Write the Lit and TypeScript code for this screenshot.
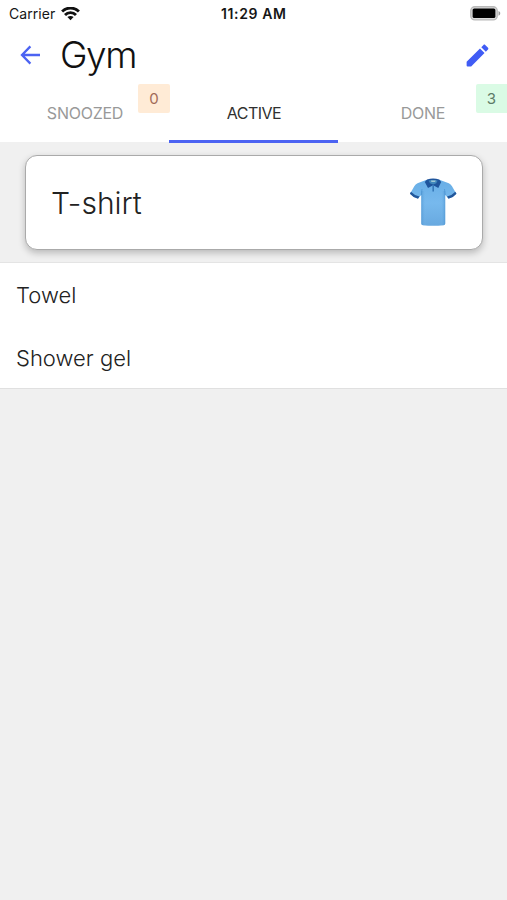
import { LitElement, html, css } from "lit";
import { customElement, property } from "lit/decorators.js";

@customElement("status-bar")
class StatusBar extends LitElement {
  static styles = css`
    :host { display: grid; grid-template-columns: 1fr auto 1fr; height: 28px; align-items: center; font-size: 14px; line-height: 28px; color: #161616; }
    .left { display: flex; align-items: center; gap: 6px; padding-left: 9px; letter-spacing: .05px; }
    .time { font-weight: 600; letter-spacing: .6px; margin-right: -.6px; }
    .right { display: flex; justify-content: flex-end; padding-right: 6px; }
    svg { display: block; }
  `;
  render() {
    return html`
      <div class="left"><span>Carrier</span>
        <svg width="19" height="14" viewBox="0 0 19 14">
          <g fill="none" stroke="#111" stroke-width="2.8">
            <path d="M1.1 4.6C5.8-.2 13.2-.2 17.9 4.6" />
            <path d="M4 8C7 4.9 12 4.9 15 8" />
          </g>
          <path d="M6.4 10.1C8.2 8.5 10.8 8.5 12.6 10.1L9.5 13.2Z" fill="#111" />
        </svg>
      </div>
      <div class="time">11:29 AM</div>
      <div class="right">
        <svg width="31" height="16" viewBox="0 0 31 16">
          <rect x=".8" y=".7" width="26.4" height="13.2" rx="4" fill="#ddd" stroke="#b9b9b9" stroke-width="1.4" />
          <rect x="2.6" y="2.5" width="22.8" height="9.6" rx="1.6" fill="#000" />
          <path d="M28.5 5.1C30.8 5.9 30.8 8.9 28.5 9.7Z" fill="#999" />
        </svg>
      </div>`;
  }
}

@customElement("tab-item")
class TabItem extends LitElement {
  @property() label = "";
  @property() count = "";
  @property() tone = "";
  @property({ type: Boolean, reflect: true }) active = false;
  static styles = css`
    :host { flex: 1; position: relative; display: flex; justify-content: center; height: 61px; box-sizing: border-box; padding-top: 21px; border-bottom: 3px solid transparent; font-size: 16px; line-height: 20px; color: #999; }
    :host([active]) { color: #303030; border-color: #4c63f2; }
    .label { letter-spacing: -.25px; padding-left: 1px; }
    :host([active]) .label { letter-spacing: -.5px; }
    .badge { position: absolute; right: 0; top: 2px; width: 31px; height: 29px; line-height: 30px; text-align: center; font-size: 15px; }
    .snoozed { background: #ffebd6; color: #a26a58; border-radius: 2px; right: -1px; width: 32px; }
    .done { background: #dafbe5; color: #5c7a66; border-radius: 2px 0 0 2px; }
  `;
  render() {
    return html`<span class="label">${this.label}</span>
      ${this.count ? html`<span class="badge ${this.tone}">${this.count}</span>` : ""}`;
  }
}

@customElement("shirt-icon")
class ShirtIcon extends LitElement {
  static styles = css`svg { display: block; }`;
  render() {
    return html`<svg width="48" height="50" viewBox="0 0 48 50">
      <defs>
        <linearGradient id="body" x1="0" y1="0" x2="0" y2="1">
          <stop offset="0" stop-color="#68aee6" /><stop offset=".5" stop-color="#77b9ed" /><stop offset="1" stop-color="#68a9e0" />
        </linearGradient>
        <linearGradient id="side" x1="0" y1="0" x2="1" y2="0">
          <stop offset="0" stop-color="#468fce" stop-opacity=".6" /><stop offset=".2" stop-color="#7dbef0" stop-opacity="0" />
          <stop offset=".8" stop-color="#7dbef0" stop-opacity="0" /><stop offset="1" stop-color="#468fce" stop-opacity=".6" />
        </linearGradient>
      </defs>
      <path d="M17 3L8.5 6.2Q6.5 7.2 5.3 9.2L1 16.7Q4 20 9 21.5L12.3 18V46.5Q12.3 48 14 48.2Q24 49.3 34.5 48.2Q36.2 48 36.2 46.5V18L39.5 21.5Q44.5 20 47.3 16.7L43 9.2Q41.8 7.2 39.8 6.2L31 3Q24 5 17 3Z" fill="url(#body)" />
      <path d="M12.3 14H36.2V46.5Q36.2 48 34.5 48.2Q24 49.3 14 48.2Q12.3 48 12.3 46.5Z" fill="url(#side)" />
      <path d="M2 14.7L.9 16.7Q4 20.5 9 21.7L10.5 19.5Q5 18.2 2 14.7ZM46.3 14.7L47.5 16.7Q44.5 20.5 39.5 21.7L38 19.5Q43.3 18.2 46.3 14.7Z" fill="#21569a" />
      <path d="M18 2.4Q24 .4 30.3 2.4L32.2 5L29.3 11L24.2 8.2L19 11L15.8 5Z" fill="#1f559c" />
      <path d="M19.6 3.5Q24 2.3 28.6 3.5L27.3 6.3L24.2 7.6L21 6.3Z" fill="#4188bd" />
      <path d="M21.7 3.6H26.8L26 5H22.5Z" fill="#9fc8d4" />
      <path d="M24.2 8V14.5" stroke="#3679b9" stroke-width="1.6" />
      <path d="M12.3 18L13 12M36.2 18L35.5 12" stroke="#4e96d3" stroke-width=".8" fill="none" />
    </svg>`;
  }
}

@customElement("app-root")
class AppRoot extends LitElement {
  static styles = css`
    :host { display: block; height: 900px; background: #f0f0f0; font-family: Inter, "Liberation Sans", sans-serif; overflow: hidden; }
    .top { background: #fff; height: 142px; }
    .header { display: flex; align-items: center; height: 54px; padding: 0 15px 0 18px; }
    .header svg { display: block; flex: none; }
    h1 { flex: 1; margin: 0 0 0 16px; font-size: 37px; font-weight: 300; letter-spacing: -1.4px; line-height: 54px; color: #111; }
    .tabs { display: flex; height: 60px; }
    .stage { height: 121px; box-sizing: border-box; padding: 13px 24.5px 0 25px; border-bottom: 1px solid #e4e4e4; }
    .card { display: flex; align-items: center; justify-content: space-between; box-sizing: border-box; height: 95px; padding: 0 25px 2px 25px; background: #fff; border: 1px solid #aaa; border-radius: 12px; box-shadow: 0 3px 7px rgba(0, 0, 0, .23); font-size: 30px; font-weight: 300; color: #222; }
    .card span { padding-top: 2px; }
    .list { background: #fff; border-bottom: 1px solid #e0e0e0; }
    .row { height: 62.5px; padding-left: 16px; line-height: 64px; font-size: 22px; font-weight: 300; color: #222; }
  `;
  render() {
    return html`
      <div class="top">
        <status-bar></status-bar>
        <div class="header">
          <svg width="26" height="26" viewBox="0 0 26 26"><path d="M12.4 4.4L4 13L12.4 21.6M4 13H22" fill="none" stroke="#4c63f2" stroke-width="2.3" /></svg>
          <h1>Gym</h1>
          <svg width="29" height="29" viewBox="0 0 24 24"><path fill="#405cf5" d="M3 17.25V20.2Q3 21 3.8 21H6.75L17.81 9.94L14.06 6.19ZM20.71 7.04C21.1 6.65 21.1 6.02 20.71 5.63L18.37 3.29C17.98 2.9 17.35 2.9 16.96 3.29L15.13 5.12L18.88 8.87Z" /></svg>
        </div>
        <div class="tabs">
          <tab-item label="SNOOZED" count="0" tone="snoozed"></tab-item>
          <tab-item label="ACTIVE" active></tab-item>
          <tab-item label="DONE" count="3" tone="done"></tab-item>
        </div>
      </div>
      <div class="stage"><div class="card"><span>T-shirt</span><shirt-icon></shirt-icon></div></div>
      <div class="list">
        ${["Towel", "Shower gel"].map((t) => html`<div class="row">${t}</div>`)}
      </div>`;
  }
}
